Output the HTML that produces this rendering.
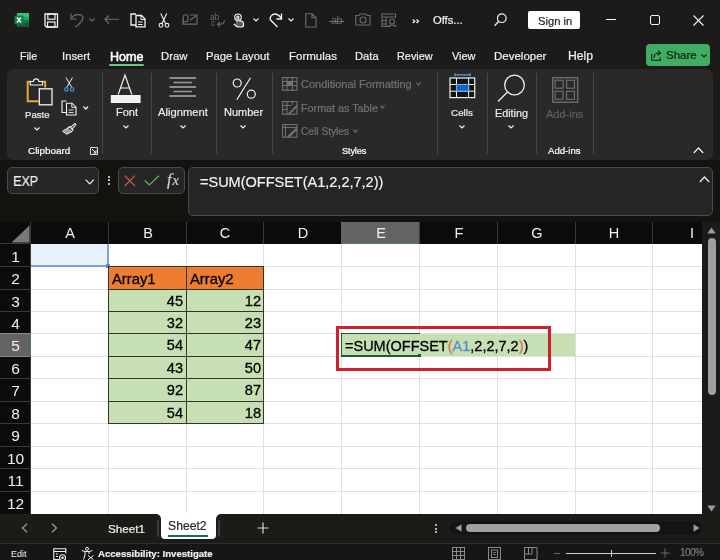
<!DOCTYPE html><html><head><meta charset="utf-8"><style>
*{margin:0;padding:0;box-sizing:border-box}
html,body{width:720px;height:560px;overflow:hidden;background:#1c1b19;font-family:"Liberation Sans",sans-serif}
.a{position:absolute}
.t{position:absolute;white-space:nowrap;line-height:1;will-change:transform}
svg{position:absolute;overflow:visible}
.sep{position:absolute;width:1px;background:#464646}
.rl{color:#ececec}
.gl{color:#ffffff}
.dis{color:#7a7a7a}
</style></head><body>
<div class="a" style="left:0px;top:0px;width:720px;height:68px;background:#1c1b19;"></div>
<div class="a" style="left:0px;top:160px;width:720px;height:62px;background:#15130f;"></div>
<svg style="left:14px;top:12px" width="16" height="16" viewBox="0 0 16 16">
<rect x="3" y="1" width="12" height="14" rx="1.2" fill="#21a366"/>
<rect x="3" y="1" width="12" height="4" rx="1" fill="#33c481"/>
<rect x="9" y="8" width="6" height="7" fill="#107c41"/>
<rect x="3" y="11" width="12" height="4" rx="1" fill="#185c37"/>
<rect x="0.5" y="3.5" width="9" height="9" rx="1" fill="#107c41"/>
<path d="M3 5.5 L7 10.5 M7 5.5 L3 10.5" stroke="#fff" stroke-width="1.4"/>
</svg>
<svg style="left:44px;top:12.5px" width="15" height="15" viewBox="0 0 15 15">
<path d="M1 1 H13.5 V14 H2.5 L1 12.5 Z" fill="none" stroke="#f2f2f2" stroke-width="1.3"/>
<rect x="3.8" y="1" width="7.2" height="5.2" fill="none" stroke="#f2f2f2" stroke-width="1.2"/>
<rect x="3.5" y="9" width="7.5" height="5" fill="none" stroke="#f2f2f2" stroke-width="1.2"/>
</svg>
<svg style="left:70px;top:12px" width="14" height="16" viewBox="0 0 14 16">
<path d="M1 1.5 V7 H6.5" fill="none" stroke="#6c6c6c" stroke-width="1.2"/>
<path d="M1.5 6.5 C4 1.5 12 1.5 12.8 5.5 C13.5 9 9 12 5.5 15" fill="none" stroke="#6c6c6c" stroke-width="1.2"/>
</svg>
<svg style="left:89px;top:17.5px" width="6" height="4" viewBox="0 0 6 4"><path d="M0.5 0.5 L3 3 L5.5 0.5" fill="none" stroke="#6c6c6c" stroke-width="1.1"/></svg>
<svg style="left:104px;top:15px" width="16" height="10" viewBox="0 0 16 10"><path d="M15 4.25 H1.2 M5 0.5 L1 4.25 L5 8.5" fill="none" stroke="#6c6c6c" stroke-width="1.2"/></svg>
<svg style="left:130px;top:13px" width="16" height="15" viewBox="0 0 16 15">
<path d="M6 1 H1 V12 H6" fill="none" stroke="#f2f2f2" stroke-width="1.3"/>
<path d="M6 2.5 H11.5 L15 6 V13.8 H6 Z" fill="none" stroke="#f2f2f2" stroke-width="1.3"/>
<path d="M11 2.5 V6.5 H15" fill="none" stroke="#f2f2f2" stroke-width="1"/>
<path d="M8 9 H12.5 M8 11.5 H12.5" stroke="#f2f2f2" stroke-width="1"/>
</svg>
<svg style="left:158px;top:12.5px" width="12" height="15" viewBox="0 0 12 15">
<path d="M2.8 0.5 L7.5 10.5 M8.7 0.5 L4 10.5" stroke="#f2f2f2" stroke-width="1.1" fill="none"/>
<circle cx="3" cy="12.3" r="1.9" fill="none" stroke="#f2f2f2" stroke-width="1.1"/>
<circle cx="9" cy="12.3" r="1.9" fill="none" stroke="#f2f2f2" stroke-width="1.1"/>
</svg>
<svg style="left:182px;top:14px" width="16" height="11" viewBox="0 0 16 11">
<path d="M8 1 H15 V10.2 H1 V5.5" fill="none" stroke="#6c6c6c" stroke-width="1.2"/>
<rect x="1.2" y="0.8" width="4.8" height="7" rx="2.4" fill="none" stroke="#6c6c6c" stroke-width="1.1"/>
<path d="M8 6.2 L14.5 1.5" stroke="#6c6c6c" stroke-width="1.2"/>
</svg>
<div class="t" style="left:210px;top:12.5px;font-size:8.5px;color:#6c6c6c;letter-spacing:-0.3px">ab</div>
<div class="t" style="left:210.5px;top:19px;font-size:8.5px;color:#6c6c6c">c</div>
<svg style="left:216px;top:20px" width="9" height="7" viewBox="0 0 9 7"><path d="M8.5 0.5 C8.5 3.5 6 4.5 1.5 4.5 M4 2 L1.5 4.5 L4 6.8" fill="none" stroke="#6c6c6c" stroke-width="1.1"/></svg>
<svg style="left:233px;top:13px" width="12" height="15" viewBox="0 0 12 15">
<path d="M3.2 7.5 C0.8 5.5 1.2 1 5 1 C8.8 1 9.2 5.5 6.8 7.5" fill="none" stroke="#f2f2f2" stroke-width="1.2"/>
<path d="M4 9.5 V3.8 C4 2.8 5.8 2.8 5.8 3.8 V7.5 L9 8.3 C10.3 8.6 10.5 9.5 10.5 10.5 V12 C10.5 13.5 9.5 14 8.5 14 H5.5 C4.5 14 3.5 13.5 2.5 12.5 L1 11" fill="#5a5a5a" stroke="#f2f2f2" stroke-width="1.2"/>
</svg>
<svg style="left:252.5px;top:17.5px" width="6" height="4" viewBox="0 0 6 4"><path d="M0.5 0.5 L3 3 L5.5 0.5" fill="none" stroke="#f2f2f2" stroke-width="1.1"/></svg>
<svg style="left:269px;top:12.5px" width="14" height="15" viewBox="0 0 14 15">
<path d="M8.5 14 L2 7.5 C0 5.5 2 1 6 1 C9 1 11 3.5 12.5 5" fill="none" stroke="#f2f2f2" stroke-width="1.3"/>
<path d="M12.5 0.5 V6 H7.5" fill="none" stroke="#f2f2f2" stroke-width="1.3"/>
</svg>
<svg style="left:287.5px;top:17.5px" width="6" height="4" viewBox="0 0 6 4"><path d="M0.5 0.5 L3 3 L5.5 0.5" fill="none" stroke="#f2f2f2" stroke-width="1.1"/></svg>
<svg style="left:304.5px;top:12.5px" width="12" height="15" viewBox="0 0 12 15"><path d="M0.8 0.8 H7 L11 4.8 V14 H0.8 Z M7 0.8 V4.8 H11" fill="none" stroke="#6c6c6c" stroke-width="1.1"/></svg>
<div class="t" style="left:330.5px;top:15px;font-size:11px;color:#6c6c6c;letter-spacing:-0.5px">ab</div>
<div class="a" style="left:329px;top:21px;width:15px;height:1px;background:#6c6c6c;"></div>
<svg style="left:354.5px;top:13px" width="16" height="13" viewBox="0 0 16 13">
<path d="M0.8 2.5 H4 L5 1 H11 L12 2.5 H15 V12 H0.8 Z" fill="none" stroke="#6c6c6c" stroke-width="1.1"/>
<circle cx="8" cy="7" r="3" fill="none" stroke="#6c6c6c" stroke-width="1.1"/>
</svg>
<svg style="left:381px;top:12.5px" width="16" height="15" viewBox="0 0 16 15">
<path d="M9 13.5 H1 V1 H14.5 V5" fill="none" stroke="#6c6c6c" stroke-width="1.1"/>
<path d="M1 4 H14.5 M5 4 V13.5 M1 7.5 H6 M1 11 H6" stroke="#6c6c6c" stroke-width="1"/>
<circle cx="11" cy="8.5" r="2.5" fill="none" stroke="#6c6c6c" stroke-width="1.1"/>
<path d="M7 14 C7.5 11.5 14.5 11.5 15 14" fill="none" stroke="#6c6c6c" stroke-width="1.1"/>
</svg>
<svg style="left:411.5px;top:18.5px" width="8" height="5" viewBox="0 0 8 5"><path d="M0.8 0.5 L2.8 2.2 L0.8 4 M4.5 0.5 L6.5 2.2 L4.5 4" fill="none" stroke="#f2f2f2" stroke-width="1.3"/></svg>
<div class="t" style="left:433px;top:15px;font-size:11.2px;color:#f2f2f2;-webkit-text-stroke-width:0.2px;">Offs...</div>
<svg style="left:494px;top:13px" width="13" height="14" viewBox="0 0 13 14"><circle cx="7.8" cy="5.2" r="4.3" fill="none" stroke="#f2f2f2" stroke-width="1.2"/><path d="M4.8 8.3 L0.6 12.8" stroke="#f2f2f2" stroke-width="1.3"/></svg>
<div class="a" style="left:528px;top:11px;width:52px;height:18px;background:#ffffff;border-radius:2px"></div>
<div class="t" style="left:537.5px;top:15.5px;font-size:11.2px;color:#1e1e1e;-webkit-text-stroke-width:0.2px;">Sign in</div>
<div class="a" style="left:606px;top:19px;width:10px;height:1px;background:#f2f2f2;"></div>
<div class="a" style="left:650px;top:15px;width:10px;height:10px;border:1px solid #f2f2f2;border-radius:2px"></div>
<svg style="left:693px;top:15px" width="11" height="11" viewBox="0 0 11 11"><path d="M0.5 0.5 L10.5 10.5 M10.5 0.5 L0.5 10.5" stroke="#f2f2f2" stroke-width="1.1"/></svg>
<div class="t" style="left:20px;top:51.277100000000004px;font-size:10.6px;color:#f0f0f0;-webkit-text-stroke-width:0.2px;">File</div>
<div class="t" style="left:62px;top:50.68455px;font-size:11.3px;color:#f0f0f0;-webkit-text-stroke-width:0.2px;">Insert</div>
<div class="t" style="left:160.5px;top:50.68455px;font-size:11.3px;color:#f0f0f0;-webkit-text-stroke-width:0.2px;">Draw</div>
<div class="t" style="left:205.5px;top:50.68455px;font-size:11.3px;color:#f0f0f0;-webkit-text-stroke-width:0.2px;">Page Layout</div>
<div class="t" style="left:289px;top:50.51525px;font-size:11.5px;color:#f0f0f0;-webkit-text-stroke-width:0.2px;">Formulas</div>
<div class="t" style="left:355px;top:50.7692px;font-size:11.2px;color:#f0f0f0;-webkit-text-stroke-width:0.2px;">Data</div>
<div class="t" style="left:397px;top:51.02315px;font-size:10.9px;color:#f0f0f0;-webkit-text-stroke-width:0.2px;">Review</div>
<div class="t" style="left:451.75px;top:51.02315px;font-size:10.9px;color:#f0f0f0;-webkit-text-stroke-width:0.2px;">View</div>
<div class="t" style="left:494px;top:50.51525px;font-size:11.5px;color:#f0f0f0;-webkit-text-stroke-width:0.2px;">Developer</div>
<div class="t" style="left:567.5px;top:49.9227px;font-size:12.2px;color:#f0f0f0;-webkit-text-stroke-width:0.2px;">Help</div>
<div class="t" style="left:109.5px;top:50.9px;font-size:12.5px;color:#ffffff;-webkit-text-stroke-width:0.2px;-webkit-text-stroke-width:0.55px">Home</div>
<div class="a" style="left:109px;top:64px;width:35px;height:2px;background:#6cc48a;border-radius:1px"></div>
<div class="a" style="left:646px;top:44px;width:64px;height:22px;background:#41ad63;border-radius:4px"></div>
<svg style="left:650.5px;top:50px" width="11" height="11" viewBox="0 0 11 11"><path d="M0.7 4 V10.3 H9.3 V7.5" fill="none" stroke="#0f1f12" stroke-width="1.1"/><path d="M3 8 C3 4.5 5 3 9 3 M6.8 0.7 L9.5 3 L6.8 5.3" fill="none" stroke="#0f1f12" stroke-width="1.1"/></svg>
<div class="t" style="left:665.5px;top:50.2px;font-size:11.5px;color:#0f1f12;-webkit-text-stroke-width:0.2px;">Share</div>
<svg style="left:700.5px;top:54px" width="6" height="4" viewBox="0 0 6 4"><path d="M0.5 0.5 L3 3 L5.5 0.5" fill="none" stroke="#0f1f12" stroke-width="1.1"/></svg>
<div class="a" style="left:7px;top:69px;width:706px;height:91px;background:#292929;border-radius:7px"></div>
<div class="sep" style="left:102px;top:73px;height:81px"></div>
<div class="sep" style="left:151px;top:73px;height:81px"></div>
<div class="sep" style="left:216px;top:73px;height:81px"></div>
<div class="sep" style="left:272px;top:73px;height:81px"></div>
<div class="sep" style="left:437px;top:73px;height:81px"></div>
<div class="sep" style="left:487px;top:73px;height:81px"></div>
<div class="sep" style="left:536px;top:73px;height:81px"></div>
<div class="sep" style="left:593px;top:73px;height:81px"></div>
<svg style="left:26px;top:76.5px" width="27" height="29" viewBox="0 0 27 29">
<path d="M5 4.8 H1.7 V24.2 H12.5" fill="none" stroke="#f0a830" stroke-width="2"/>
<path d="M15 4.8 H19.2 V10.5" fill="none" stroke="#f0a830" stroke-width="2"/>
<path d="M4.3 8 V4.5 H7.5 C7.5 1 12.8 1 12.8 4.5 H16.5 V8 Z" fill="#292929" stroke="#f2f2f2" stroke-width="1.1"/>
<rect x="13.3" y="11.8" width="12.7" height="16" fill="#292929" stroke="#f2f2f2" stroke-width="1.3"/>
</svg>
<div class="t" style="left:24.9px;top:110.3px;font-size:9.6px;color:#ececec;-webkit-text-stroke-width:0.2px;">Paste</div>
<svg style="left:33.7px;top:127.30000000000001px" width="6" height="4" viewBox="0 0 6 4"><path d="M0.5 0.5 L3.0 3 L5.5 0.5" fill="none" stroke="#f2f2f2" stroke-width="1.2"/></svg>
<svg style="left:63.5px;top:76.5px" width="11" height="15" viewBox="0 0 11 15">
<path d="M2 0.5 L7.8 10.5 M8.5 0.5 L2.7 10.5" stroke="#f2f2f2" stroke-width="1" fill="none"/>
<circle cx="2.4" cy="12.4" r="1.7" fill="none" stroke="#4a90d9" stroke-width="1.2"/>
<circle cx="8.1" cy="12.4" r="1.7" fill="none" stroke="#4a90d9" stroke-width="1.2"/>
</svg>
<svg style="left:60.5px;top:99.5px" width="16" height="16" viewBox="0 0 16 16">
<path d="M5.5 1 H1 V12.5 H5.5" fill="none" stroke="#f2f2f2" stroke-width="1.1"/>
<path d="M5.5 3.2 H11 L15 7.2 V15 H5.5 Z" fill="none" stroke="#f2f2f2" stroke-width="1.1"/>
<path d="M10.8 3.2 V7.4 H15" fill="none" stroke="#f2f2f2" stroke-width="0.9"/>
<path d="M7.5 10 H12.5 M7.5 12.5 H12.5" stroke="#f2f2f2" stroke-width="0.9"/>
</svg>
<svg style="left:82.8px;top:106.3px" width="5.6" height="4" viewBox="0 0 5.6 4"><path d="M0.5 0.5 L2.8 3 L5.1 0.5" fill="none" stroke="#f2f2f2" stroke-width="1.2"/></svg>
<svg style="left:61.5px;top:123px" width="15" height="12" viewBox="0 0 15 12">
<path d="M8.8 4.2 L12.5 0.9 C13.2 0.3 14.3 1.3 13.7 2 L10.3 5.8" fill="none" stroke="#f2f2f2" stroke-width="1.1"/>
<path d="M7.5 3.5 L11 7 L9.2 8.8 L5.7 5.3 Z" fill="none" stroke="#f2f2f2" stroke-width="1.1"/>
<path d="M5.7 5.3 C3.5 6.3 1.8 7.3 0.6 8.3 L4.8 11.2 C6.3 10.5 8.2 9.6 9.2 8.8" fill="#9a9a9a" stroke="#f2f2f2" stroke-width="1"/>
</svg>
<svg style="left:90px;top:147px" width="8" height="8" viewBox="0 0 8 8"><path d="M0.5 0.5 H7.5 V7.5 H0.5 Z" fill="none" stroke="#f2f2f2" stroke-width="0.9"/><path d="M2 2 L6 6 M6 3.3 V6 H3.3" fill="none" stroke="#f2f2f2" stroke-width="1"/></svg>
<div class="t" style="left:27.7px;top:146.4px;font-size:9.9px;color:#ffffff;-webkit-text-stroke-width:0.2px;">Clipboard</div>
<svg style="left:110px;top:74px" width="31" height="29" viewBox="0 0 31 29">
<path d="M8.2 20.5 L15 1 L21.8 20.5 M10.5 14 H19.5" fill="none" stroke="#f2f2f2" stroke-width="1.2"/>
<rect x="0.8" y="21" width="29.8" height="8" fill="#f2f2f2"/>
</svg>
<div class="t" style="left:115.5px;top:107px;font-size:11px;color:#ececec;-webkit-text-stroke-width:0.2px;">Font</div>
<svg style="left:122.5px;top:124.7px" width="6" height="4" viewBox="0 0 6 4"><path d="M0.5 0.5 L3.0 3 L5.5 0.5" fill="none" stroke="#f2f2f2" stroke-width="1.2"/></svg>
<svg style="left:169px;top:77px" width="28" height="21" viewBox="0 0 28 21">
<path d="M0.5 1 H27 M0.5 10 H27 M0.5 19 H27" stroke="#f2f2f2" stroke-width="1.2"/>
<path d="M4.5 5.5 H23 M4.5 14.5 H23" stroke="#9a9a9a" stroke-width="1.6"/>
</svg>
<div class="t" style="left:158.2px;top:107px;font-size:11.2px;color:#ececec;-webkit-text-stroke-width:0.2px;">Alignment</div>
<svg style="left:179.8px;top:124.7px" width="6" height="4" viewBox="0 0 6 4"><path d="M0.5 0.5 L3.0 3 L5.5 0.5" fill="none" stroke="#f2f2f2" stroke-width="1.2"/></svg>
<svg style="left:232px;top:76.5px" width="25" height="24" viewBox="0 0 25 24">
<circle cx="5.2" cy="6" r="4" fill="none" stroke="#f2f2f2" stroke-width="1.2"/>
<circle cx="19.3" cy="17.2" r="4" fill="none" stroke="#f2f2f2" stroke-width="1.2"/>
<path d="M18.5 0.8 L4.8 22.8" stroke="#f2f2f2" stroke-width="1.2"/>
</svg>
<div class="t" style="left:223.5px;top:107px;font-size:11px;color:#ececec;-webkit-text-stroke-width:0.2px;">Number</div>
<svg style="left:240.2px;top:124.7px" width="6" height="4" viewBox="0 0 6 4"><path d="M0.5 0.5 L3.0 3 L5.5 0.5" fill="none" stroke="#f2f2f2" stroke-width="1.2"/></svg>
<svg style="left:282px;top:77px" width="16" height="14" viewBox="0 0 16 14">
<rect x="0.6" y="0.6" width="14.4" height="12.6" fill="none" stroke="#737373" stroke-width="1.1"/>
<path d="M0.6 4.5 H15 M0.6 8.5 H15 M5 0.6 V13.2 M10.5 0.6 V13.2" stroke="#737373" stroke-width="1"/>
<rect x="5" y="4.5" width="5.5" height="4" fill="#737373"/>
</svg>
<svg style="left:282px;top:100.5px" width="16" height="14" viewBox="0 0 16 14">
<rect x="0.6" y="0.6" width="14.4" height="12.6" fill="none" stroke="#737373" stroke-width="1.1"/>
<path d="M0.6 4.5 H9 M0.6 8.5 H6 M5 0.6 V13.2 M10.5 0.6 V4" stroke="#737373" stroke-width="1"/>
<path d="M6 12.5 L14.5 4 L15.2 6 L8 13.2 Z" fill="#737373"/>
</svg>
<svg style="left:282px;top:124px" width="16" height="14" viewBox="0 0 16 14">
<rect x="0.6" y="0.6" width="14.4" height="12.6" fill="none" stroke="#737373" stroke-width="1.1"/>
<path d="M3.5 0.6 V13.2 M0.6 3.5 H15" stroke="#737373" stroke-width="1"/>
<path d="M5 12.5 L14.5 3.5 L15.2 6 L7.5 13.2 Z" fill="#737373"/>
</svg>
<div class="t" style="left:300.7px;top:79px;font-size:11px;color:#737373;-webkit-text-stroke-width:0.2px;">Conditional Formatting</div>
<svg style="left:416.3px;top:81.8px" width="5" height="4" viewBox="0 0 5 4"><path d="M0.5 0.5 L2.5 3 L4.5 0.5" fill="none" stroke="#737373" stroke-width="1.2"/></svg>
<div class="t" style="left:300.5px;top:102.5px;font-size:10.75px;color:#737373;-webkit-text-stroke-width:0.2px;">Format as Table</div>
<svg style="left:380.3px;top:105.3px" width="5" height="4" viewBox="0 0 5 4"><path d="M0.5 0.5 L2.5 3 L4.5 0.5" fill="none" stroke="#737373" stroke-width="1.2"/></svg>
<div class="t" style="left:301px;top:127px;font-size:10.2px;color:#737373;-webkit-text-stroke-width:0.2px;">Cell Styles</div>
<svg style="left:352.5px;top:129.0px" width="5" height="4" viewBox="0 0 5 4"><path d="M0.5 0.5 L2.5 3 L4.5 0.5" fill="none" stroke="#737373" stroke-width="1.2"/></svg>
<div class="t" style="left:342.2px;top:147.2px;font-size:9.3px;color:#ffffff;-webkit-text-stroke-width:0.2px;letter-spacing:-0.2px">Styles</div>
<svg style="left:449px;top:73px" width="27" height="26" viewBox="0 0 27 26">
<path d="M6 1.8 H21 M6 0.3 V3.3 M21 0.3 V3.3" stroke="#5a9fe0" stroke-width="1.3"/>
<rect x="1" y="5" width="24.7" height="19.6" fill="#141414" stroke="#f2f2f2" stroke-width="1.2"/>
<path d="M1 11.5 H25.7 M1 18.2 H25.7 M7.5 5 V24.6 M19.6 5 V24.6" stroke="#f2f2f2" stroke-width="1"/>
<rect x="7.5" y="11.5" width="12.1" height="6.7" fill="#0f63c4" stroke="#6fb0ee" stroke-width="1"/>
</svg>
<div class="t" style="left:451.25px;top:108.3px;font-size:9.9px;color:#ececec;-webkit-text-stroke-width:0.2px;">Cells</div>
<svg style="left:458.8px;top:124.7px" width="6" height="4" viewBox="0 0 6 4"><path d="M0.5 0.5 L3.0 3 L5.5 0.5" fill="none" stroke="#f2f2f2" stroke-width="1.2"/></svg>
<svg style="left:497px;top:74px" width="29" height="29" viewBox="0 0 29 29"><circle cx="17.5" cy="11" r="9.8" fill="none" stroke="#f2f2f2" stroke-width="1.3"/><path d="M10.5 18 L1 27.5" stroke="#f2f2f2" stroke-width="1.3"/></svg>
<div class="t" style="left:495px;top:108px;font-size:10.8px;color:#ececec;-webkit-text-stroke-width:0.2px;">Editing</div>
<svg style="left:508.2px;top:124.7px" width="6" height="4" viewBox="0 0 6 4"><path d="M0.5 0.5 L3.0 3 L5.5 0.5" fill="none" stroke="#f2f2f2" stroke-width="1.2"/></svg>
<svg style="left:552px;top:77px" width="27" height="26" viewBox="0 0 27 26">
<rect x="0.7" y="0.7" width="25" height="24.5" fill="none" stroke="#737373" stroke-width="1.3"/>
<rect x="3.1" y="3.2" width="8" height="8" fill="none" stroke="#737373" stroke-width="1.1"/>
<rect x="14.6" y="3.2" width="7.9" height="8" fill="none" stroke="#737373" stroke-width="1.1"/>
<rect x="3.1" y="14.3" width="8" height="8" fill="none" stroke="#737373" stroke-width="1.1"/>
<rect x="14.6" y="14.3" width="7.9" height="8" fill="none" stroke="#737373" stroke-width="1.1"/>
</svg>
<div class="t" style="left:546.2px;top:108.8px;font-size:11px;color:#5f5f5f;-webkit-text-stroke-width:0.2px;">Add-ins</div>
<div class="t" style="left:548px;top:146.4px;font-size:9.6px;color:#ffffff;-webkit-text-stroke-width:0.2px;">Add-ins</div>
<svg style="left:692.5px;top:147px" width="11" height="7" viewBox="0 0 11 7"><path d="M0.8 6 L5.5 1 L10.2 6" fill="none" stroke="#f2f2f2" stroke-width="1.2"/></svg>
<div class="a" style="left:7px;top:167px;width:92px;height:27px;background:#252525;border:1px solid #4a4a4a;border-radius:5px"></div>
<div class="t" style="left:12.8px;top:173.5px;font-size:14.5px;color:#f2f2f2;-webkit-text-stroke-width:0.2px;transform:scaleX(0.87);transform-origin:0 0">EXP</div>
<svg style="left:85px;top:178.5px" width="10" height="6" viewBox="0 0 10 6"><path d="M0.7 0.7 L4.75 4.8 L8.8 0.7" fill="none" stroke="#f2f2f2" stroke-width="1.2"/></svg>
<div class="a" style="left:107.7px;top:175.7px;width:2px;height:2px;background:#f2f2f2;border-radius:1px"></div>
<div class="a" style="left:107.7px;top:179.3px;width:2px;height:2px;background:#f2f2f2;border-radius:1px"></div>
<div class="a" style="left:107.7px;top:183px;width:2px;height:2px;background:#f2f2f2;border-radius:1px"></div>
<div class="a" style="left:118px;top:167px;width:67px;height:27px;background:#252525;border:1px solid #4a4a4a;border-radius:5px"></div>
<svg style="left:123.5px;top:174.8px" width="12" height="12" viewBox="0 0 12 12"><path d="M0.7 0.7 L11 11 M11 0.7 L0.7 11" stroke="#d9534f" stroke-width="1.2"/></svg>
<svg style="left:143.5px;top:174.5px" width="16" height="11" viewBox="0 0 16 11"><path d="M0.7 5.5 L5.3 10 L15 0.7" fill="none" stroke="#5cb85c" stroke-width="1.2"/></svg>
<div class="t" style="left:166.8px;top:171.5px;font-size:16.5px;color:#d0d0d0;-webkit-text-stroke-width:0.2px;font-family:'Liberation Serif',serif"><i>f</i><i style="font-size:14.5px;margin-left:0.8px">x</i></div>
<div class="a" style="left:188px;top:167px;width:525px;height:49px;background:#252525;border:1px solid #4a4a4a;border-radius:5px"></div>
<div class="t" style="left:200.2px;top:175px;font-size:14.5px;color:#f2f2f2;-webkit-text-stroke-width:0.2px;">=SUM(OFFSET(A1,2,2,7,2))</div>
<svg style="left:699px;top:175.5px" width="11" height="7" viewBox="0 0 11 7"><path d="M0.8 6 L5.5 1 L10.2 6" fill="none" stroke="#f2f2f2" stroke-width="1.2"/></svg>
<div class="a" style="left:0px;top:222px;width:702px;height:22px;background:#0b0b0b;"></div>
<div class="a" style="left:0px;top:244px;width:30px;height:270px;background:#0b0b0b;"></div>
<div class="a" style="left:31px;top:244px;width:671px;height:270px;background:#ffffff;"></div>
<div class="a" style="left:108px;top:244px;width:1px;height:270px;background:#e0e0e0;"></div>
<div class="a" style="left:186px;top:244px;width:1px;height:270px;background:#e0e0e0;"></div>
<div class="a" style="left:263px;top:244px;width:1px;height:270px;background:#e0e0e0;"></div>
<div class="a" style="left:341px;top:244px;width:1px;height:270px;background:#e0e0e0;"></div>
<div class="a" style="left:419px;top:244px;width:1px;height:270px;background:#e0e0e0;"></div>
<div class="a" style="left:497px;top:244px;width:1px;height:270px;background:#e0e0e0;"></div>
<div class="a" style="left:575px;top:244px;width:1px;height:270px;background:#e0e0e0;"></div>
<div class="a" style="left:652px;top:244px;width:1px;height:270px;background:#e0e0e0;"></div>
<div class="a" style="left:31px;top:266px;width:671px;height:1px;background:#e0e0e0;"></div>
<div class="a" style="left:31px;top:289px;width:671px;height:1px;background:#e0e0e0;"></div>
<div class="a" style="left:31px;top:311px;width:671px;height:1px;background:#e0e0e0;"></div>
<div class="a" style="left:31px;top:333px;width:671px;height:1px;background:#e0e0e0;"></div>
<div class="a" style="left:31px;top:356px;width:671px;height:1px;background:#e0e0e0;"></div>
<div class="a" style="left:31px;top:378px;width:671px;height:1px;background:#e0e0e0;"></div>
<div class="a" style="left:31px;top:401px;width:671px;height:1px;background:#e0e0e0;"></div>
<div class="a" style="left:31px;top:423px;width:671px;height:1px;background:#e0e0e0;"></div>
<div class="a" style="left:31px;top:446px;width:671px;height:1px;background:#e0e0e0;"></div>
<div class="a" style="left:31px;top:468px;width:671px;height:1px;background:#e0e0e0;"></div>
<div class="a" style="left:31px;top:491px;width:671px;height:1px;background:#e0e0e0;"></div>
<div class="a" style="left:30px;top:222px;width:1px;height:292px;background:#3a3a3a;"></div>
<div class="a" style="left:0px;top:243px;width:30px;height:1px;background:#3a3a3a;"></div>
<div class="a" style="left:108px;top:222px;width:1px;height:22px;background:#3a3a3a;"></div>
<div class="a" style="left:186px;top:222px;width:1px;height:22px;background:#3a3a3a;"></div>
<div class="a" style="left:263px;top:222px;width:1px;height:22px;background:#3a3a3a;"></div>
<div class="a" style="left:341px;top:222px;width:1px;height:22px;background:#3a3a3a;"></div>
<div class="a" style="left:419px;top:222px;width:1px;height:22px;background:#3a3a3a;"></div>
<div class="a" style="left:497px;top:222px;width:1px;height:22px;background:#3a3a3a;"></div>
<div class="a" style="left:575px;top:222px;width:1px;height:22px;background:#3a3a3a;"></div>
<div class="a" style="left:652px;top:222px;width:1px;height:22px;background:#3a3a3a;"></div>
<div class="a" style="left:0px;top:266px;width:30px;height:1px;background:#3a3a3a;"></div>
<div class="a" style="left:0px;top:289px;width:30px;height:1px;background:#3a3a3a;"></div>
<div class="a" style="left:0px;top:311px;width:30px;height:1px;background:#3a3a3a;"></div>
<div class="a" style="left:0px;top:333px;width:30px;height:1px;background:#3a3a3a;"></div>
<div class="a" style="left:0px;top:356px;width:30px;height:1px;background:#3a3a3a;"></div>
<div class="a" style="left:0px;top:378px;width:30px;height:1px;background:#3a3a3a;"></div>
<div class="a" style="left:0px;top:401px;width:30px;height:1px;background:#3a3a3a;"></div>
<div class="a" style="left:0px;top:423px;width:30px;height:1px;background:#3a3a3a;"></div>
<div class="a" style="left:0px;top:446px;width:30px;height:1px;background:#3a3a3a;"></div>
<div class="a" style="left:0px;top:468px;width:30px;height:1px;background:#3a3a3a;"></div>
<div class="a" style="left:0px;top:491px;width:30px;height:1px;background:#3a3a3a;"></div>
<svg style="left:10.5px;top:225px" width="19" height="18" viewBox="0 0 19 18"><path d="M18.5 0.5 V17.5 H0.5 Z" fill="#7a7a7a"/></svg>
<div class="a" style="left:341px;top:222px;width:78px;height:22px;background:#636363;"></div>
<div class="a" style="left:341px;top:243px;width:78px;height:1px;background:#4f7a60;"></div>
<div class="a" style="left:0px;top:333px;width:30px;height:23px;background:#636363;"></div>
<div class="a" style="left:0px;top:333px;width:30px;height:1px;background:#8a8a8a;"></div>
<div class="a" style="left:0px;top:356px;width:30px;height:1px;background:#8a8a8a;"></div>
<div class="a" style="left:30px;top:333px;width:1px;height:23px;background:#4f7a60;"></div>
<div class="t" style="left:49.5px;top:226px;width:40px;text-align:center;font-size:14.5px;color:#f0f0f0">A</div>
<div class="t" style="left:127.5px;top:226px;width:40px;text-align:center;font-size:14.5px;color:#f0f0f0">B</div>
<div class="t" style="left:205.0px;top:226px;width:40px;text-align:center;font-size:14.5px;color:#f0f0f0">C</div>
<div class="t" style="left:282.5px;top:226px;width:40px;text-align:center;font-size:14.5px;color:#f0f0f0">D</div>
<div class="t" style="left:360.5px;top:226px;width:40px;text-align:center;font-size:14.5px;color:#f0f0f0">E</div>
<div class="t" style="left:438.5px;top:226px;width:40px;text-align:center;font-size:14.5px;color:#f0f0f0">F</div>
<div class="t" style="left:516.5px;top:226px;width:40px;text-align:center;font-size:14.5px;color:#f0f0f0">G</div>
<div class="t" style="left:594.0px;top:226px;width:40px;text-align:center;font-size:14.5px;color:#f0f0f0">H</div>
<div class="t" style="left:672px;top:226px;width:40px;text-align:center;font-size:14.5px;color:#f0f0f0">I</div>
<div class="t" style="left:0px;top:249px;width:31px;text-align:center;font-size:15.5px;color:#f0f0f0">1</div>
<div class="t" style="left:0px;top:271px;width:31px;text-align:center;font-size:15.5px;color:#f0f0f0">2</div>
<div class="t" style="left:0px;top:294px;width:31px;text-align:center;font-size:15.5px;color:#f0f0f0">3</div>
<div class="t" style="left:0px;top:316px;width:31px;text-align:center;font-size:15.5px;color:#f0f0f0">4</div>
<div class="t" style="left:0px;top:338px;width:31px;text-align:center;font-size:15.5px;color:#f0f0f0">5</div>
<div class="t" style="left:0px;top:361px;width:31px;text-align:center;font-size:15.5px;color:#f0f0f0">6</div>
<div class="t" style="left:0px;top:383px;width:31px;text-align:center;font-size:15.5px;color:#f0f0f0">7</div>
<div class="t" style="left:0px;top:406px;width:31px;text-align:center;font-size:15.5px;color:#f0f0f0">8</div>
<div class="t" style="left:0px;top:428px;width:31px;text-align:center;font-size:15.5px;color:#f0f0f0">9</div>
<div class="t" style="left:0px;top:451px;width:31px;text-align:center;font-size:15.5px;color:#f0f0f0">10</div>
<div class="t" style="left:0px;top:473px;width:31px;text-align:center;font-size:15.5px;color:#f0f0f0">11</div>
<div class="t" style="left:0px;top:496px;width:31px;text-align:center;font-size:15.5px;color:#f0f0f0">12</div>
<div class="a" style="left:31px;top:244px;width:77px;height:22px;background:#e8f0fb;"></div>
<div class="a" style="left:31px;top:265px;width:77px;height:2px;background:#7aa3d6;"></div>
<div class="a" style="left:107px;top:244px;width:2px;height:22px;background:#7aa3d6;"></div>
<div class="a" style="left:106px;top:264px;width:4px;height:4px;background:#5b8ad0;"></div>
<div class="a" style="left:109px;top:267px;width:154px;height:22px;background:#ed7d31;"></div>
<div class="a" style="left:109px;top:290px;width:154px;height:133px;background:#c6e0b4;"></div>
<div class="a" style="left:108px;top:266px;width:1px;height:158px;background:#34342c;"></div>
<div class="a" style="left:186px;top:266px;width:1px;height:158px;background:#34342c;"></div>
<div class="a" style="left:263px;top:266px;width:1px;height:158px;background:#34342c;"></div>
<div class="a" style="left:108px;top:266px;width:156px;height:1px;background:#34342c;"></div>
<div class="a" style="left:108px;top:289px;width:156px;height:1px;background:#34342c;"></div>
<div class="a" style="left:108px;top:311px;width:156px;height:1px;background:#34342c;"></div>
<div class="a" style="left:108px;top:333px;width:156px;height:1px;background:#34342c;"></div>
<div class="a" style="left:108px;top:356px;width:156px;height:1px;background:#34342c;"></div>
<div class="a" style="left:108px;top:378px;width:156px;height:1px;background:#34342c;"></div>
<div class="a" style="left:108px;top:401px;width:156px;height:1px;background:#34342c;"></div>
<div class="a" style="left:108px;top:423px;width:156px;height:1px;background:#34342c;"></div>
<div class="t" style="left:112px;top:271.5px;font-size:14.8px;color:#000000;-webkit-text-stroke-width:0.2px;-webkit-text-stroke-width:0.3px">Array1</div>
<div class="t" style="left:190px;top:271.5px;font-size:14.8px;color:#000000;-webkit-text-stroke-width:0.2px;-webkit-text-stroke-width:0.3px">Array2</div>
<div class="t" style="left:108px;top:294px;width:75px;text-align:right;font-size:14.6px;color:#000000;-webkit-text-stroke-width:0.3px">45</div>
<div class="t" style="left:186px;top:294px;width:75px;text-align:right;font-size:14.6px;color:#000000;-webkit-text-stroke-width:0.3px">12</div>
<div class="t" style="left:108px;top:316px;width:75px;text-align:right;font-size:14.6px;color:#000000;-webkit-text-stroke-width:0.3px">32</div>
<div class="t" style="left:186px;top:316px;width:75px;text-align:right;font-size:14.6px;color:#000000;-webkit-text-stroke-width:0.3px">23</div>
<div class="t" style="left:108px;top:338px;width:75px;text-align:right;font-size:14.6px;color:#000000;-webkit-text-stroke-width:0.3px">54</div>
<div class="t" style="left:186px;top:338px;width:75px;text-align:right;font-size:14.6px;color:#000000;-webkit-text-stroke-width:0.3px">47</div>
<div class="t" style="left:108px;top:361px;width:75px;text-align:right;font-size:14.6px;color:#000000;-webkit-text-stroke-width:0.3px">43</div>
<div class="t" style="left:186px;top:361px;width:75px;text-align:right;font-size:14.6px;color:#000000;-webkit-text-stroke-width:0.3px">50</div>
<div class="t" style="left:108px;top:383px;width:75px;text-align:right;font-size:14.6px;color:#000000;-webkit-text-stroke-width:0.3px">92</div>
<div class="t" style="left:186px;top:383px;width:75px;text-align:right;font-size:14.6px;color:#000000;-webkit-text-stroke-width:0.3px">87</div>
<div class="t" style="left:108px;top:406px;width:75px;text-align:right;font-size:14.6px;color:#000000;-webkit-text-stroke-width:0.3px">54</div>
<div class="t" style="left:186px;top:406px;width:75px;text-align:right;font-size:14.6px;color:#000000;-webkit-text-stroke-width:0.3px">18</div>
<div class="a" style="left:341px;top:334px;width:234px;height:22px;background:#c6e0b4;"></div>
<div class="a" style="left:341px;top:333px;width:79px;height:1px;background:#1d5a36;"></div>
<div class="a" style="left:341px;top:355px;width:79px;height:2px;background:#1d5a36;"></div>
<div class="a" style="left:341px;top:333px;width:1px;height:23px;background:#1d5a36;"></div>
<div class="a" style="left:418px;top:354px;width:3px;height:3px;background:#1d5a36;"></div>
<div class="t" style="left:345px;top:339px;font-size:14.5px;color:#000000;-webkit-text-stroke-width:0.3px">=SUM(OFFSET<span style="color:#e0704f">(</span><span style="color:#4f8fd6">A1</span>,2,2,7,2<span style="color:#e0704f">)</span>)</div>
<div class="a" style="left:336px;top:326px;width:215px;height:45px;border:3px solid #d2202a"></div>
<div class="a" style="left:702px;top:222px;width:18px;height:292px;background:#1b1b1b;"></div>
<svg style="left:707px;top:226.5px" width="9" height="7" viewBox="0 0 9 7"><path d="M4.5 0.5 L8.7 6.5 H0.3 Z" fill="#9a9a9a"/></svg>
<div class="a" style="left:708px;top:238px;width:7.5px;height:157px;background:#9e9e9e;border-radius:4px"></div>
<svg style="left:707px;top:504.5px" width="9" height="7" viewBox="0 0 9 7"><path d="M0.3 0.5 H8.7 L4.5 6.5 Z" fill="#9a9a9a"/></svg>
<div class="a" style="left:150px;top:513px;width:75px;height:8px;background:#ffffff;"></div>
<div class="a" style="left:0px;top:514px;width:160.5px;height:29px;background:#1b1b18;border-top-right-radius:5px"></div>
<div class="a" style="left:215.5px;top:514px;width:504.5px;height:29px;background:#1b1b18;border-top-left-radius:5px"></div>
<div class="a" style="left:0px;top:543px;width:720px;height:1px;background:#2e2e2e;"></div>
<svg style="left:20.5px;top:522.5px" width="7" height="10" viewBox="0 0 7 10"><path d="M6 0.7 L1.5 5 L6 9.3" fill="none" stroke="#9a9a9a" stroke-width="1.2"/></svg>
<svg style="left:50.5px;top:522.5px" width="7" height="10" viewBox="0 0 7 10"><path d="M1 0.7 L5.5 5 L1 9.3" fill="none" stroke="#9a9a9a" stroke-width="1.2"/></svg>
<div class="t" style="left:108.3px;top:523.3px;font-size:11.7px;color:#f0f0f0;-webkit-text-stroke-width:0.2px;">Sheet1</div>
<div class="a" style="left:156.5px;top:520px;width:2px;height:17px;background:#3a3a3a;border-radius:1px"></div>
<div class="a" style="left:160.5px;top:513px;width:55px;height:26px;background:#fff;border-radius:0 0 4px 4px"></div>
<div class="t" style="left:168.3px;top:520px;font-size:12.2px;color:#2a2a2a;-webkit-text-stroke-width:0.2px;">Sheet2</div>
<div class="a" style="left:168px;top:535px;width:40px;height:2px;background:#1f6b46;"></div>
<div class="a" style="left:218px;top:520px;width:2px;height:17px;background:#3a3a3a;border-radius:1px"></div>
<svg style="left:256.5px;top:522px" width="12" height="12" viewBox="0 0 12 12"><path d="M6 0.5 V11.5 M0.5 6 H11.5" stroke="#d8d8d8" stroke-width="1.2"/></svg>
<div class="a" style="left:434.8px;top:524px;width:2px;height:2px;background:#e8e8e8;border-radius:1px"></div>
<div class="a" style="left:434.8px;top:527.7px;width:2px;height:2px;background:#e8e8e8;border-radius:1px"></div>
<div class="a" style="left:434.8px;top:531.4px;width:2px;height:2px;background:#e8e8e8;border-radius:1px"></div>
<div class="a" style="left:450px;top:520.5px;width:252px;height:14.5px;background:#141414;border-radius:7px"></div>
<svg style="left:454.5px;top:524px" width="7" height="8" viewBox="0 0 7 8"><path d="M6.5 0.3 V7.7 L0.5 4 Z" fill="#9a9a9a"/></svg>
<div class="a" style="left:466px;top:524px;width:194px;height:7.5px;background:#a0a0a0;border-radius:4px"></div>
<svg style="left:692.5px;top:524px" width="7" height="8" viewBox="0 0 7 8"><path d="M0.5 0.3 V7.7 L6.5 4 Z" fill="#9a9a9a"/></svg>
<div class="a" style="left:0px;top:544px;width:720px;height:16px;background:#161616;"></div>
<div class="t" style="left:10.5px;top:549.7px;font-size:9px;color:#f0f0f0;">Edit</div>
<svg style="left:53px;top:547.5px" width="14" height="13" viewBox="0 0 14 13">
<path d="M6 11.5 H0.8 V0.8 H12.8 V5.5" fill="none" stroke="#f2f2f2" stroke-width="1.1"/>
<path d="M0.8 3.5 H12.8 M3 6 H5 M3 8.5 H5" stroke="#f2f2f2" stroke-width="1"/>
<circle cx="9.5" cy="9.8" r="3" fill="#161616" stroke="#f2f2f2" stroke-width="1.1"/>
<circle cx="9.5" cy="9.8" r="1.3" fill="#f2f2f2"/>
</svg>
<svg style="left:81px;top:547px" width="14" height="13" viewBox="0 0 14 13">
<circle cx="6" cy="1.8" r="1.5" fill="none" stroke="#f2f2f2" stroke-width="1"/>
<path d="M0.8 3.5 C3 5 9 5 11.5 3.5 M4 5 V8 L2.5 12.5 M8 5 V7" fill="none" stroke="#f2f2f2" stroke-width="1"/>
<path d="M7 8.5 L12.5 12.8 M12.5 8.5 L7 12.8" stroke="#f2f2f2" stroke-width="1"/>
</svg>
<div class="t" style="left:98px;top:548.8px;font-size:9.6px;color:#f0f0f0;-webkit-text-stroke-width:0.2px;font-weight:bold;">Accessibility: Investigate</div>
<svg style="left:451.5px;top:546.5px" width="13" height="13" viewBox="0 0 13 13"><rect x="0.5" y="0.5" width="12" height="12" fill="none" stroke="#8a8a8a" stroke-width="1"/><path d="M4.5 0.5 V12.5 M8.5 0.5 V12.5 M0.5 4.5 H12.5 M0.5 8.5 H12.5" stroke="#8a8a8a" stroke-width="1"/></svg>
<svg style="left:487.5px;top:546.5px" width="13" height="13" viewBox="0 0 13 13"><rect x="0.5" y="0.5" width="12" height="12" fill="none" stroke="#8a8a8a" stroke-width="1"/><rect x="3.5" y="3" width="6" height="7.5" fill="none" stroke="#8a8a8a" stroke-width="1"/><path d="M5 5.5 H8 M5 7.5 H8" stroke="#8a8a8a" stroke-width="0.8"/></svg>
<svg style="left:524px;top:546.5px" width="14" height="13" viewBox="0 0 14 13"><path d="M0.5 12.5 V0.5 H13 V12.5 H0.5 M0.5 7 H8 V0.5 M4.5 0.5 V7" fill="none" stroke="#8a8a8a" stroke-width="1"/></svg>
<div class="a" style="left:554px;top:553px;width:6px;height:1px;background:#6a6a6a;"></div>
<div class="a" style="left:566px;top:552.5px;width:90px;height:1.3px;background:#d0d0d0;"></div>
<div class="a" style="left:610.5px;top:549.5px;width:1.3px;height:7px;background:#d0d0d0;"></div>
<svg style="left:659.5px;top:548px" width="10" height="10" viewBox="0 0 10 10"><path d="M5 0.5 V9.5 M0.5 5 H9.5" stroke="#6a6a6a" stroke-width="1"/></svg>
<div class="t" style="left:680px;top:548px;font-size:10px;color:#7a7a7a;-webkit-text-stroke-width:0.2px;letter-spacing:-0.6px">100%</div>
</body></html>
